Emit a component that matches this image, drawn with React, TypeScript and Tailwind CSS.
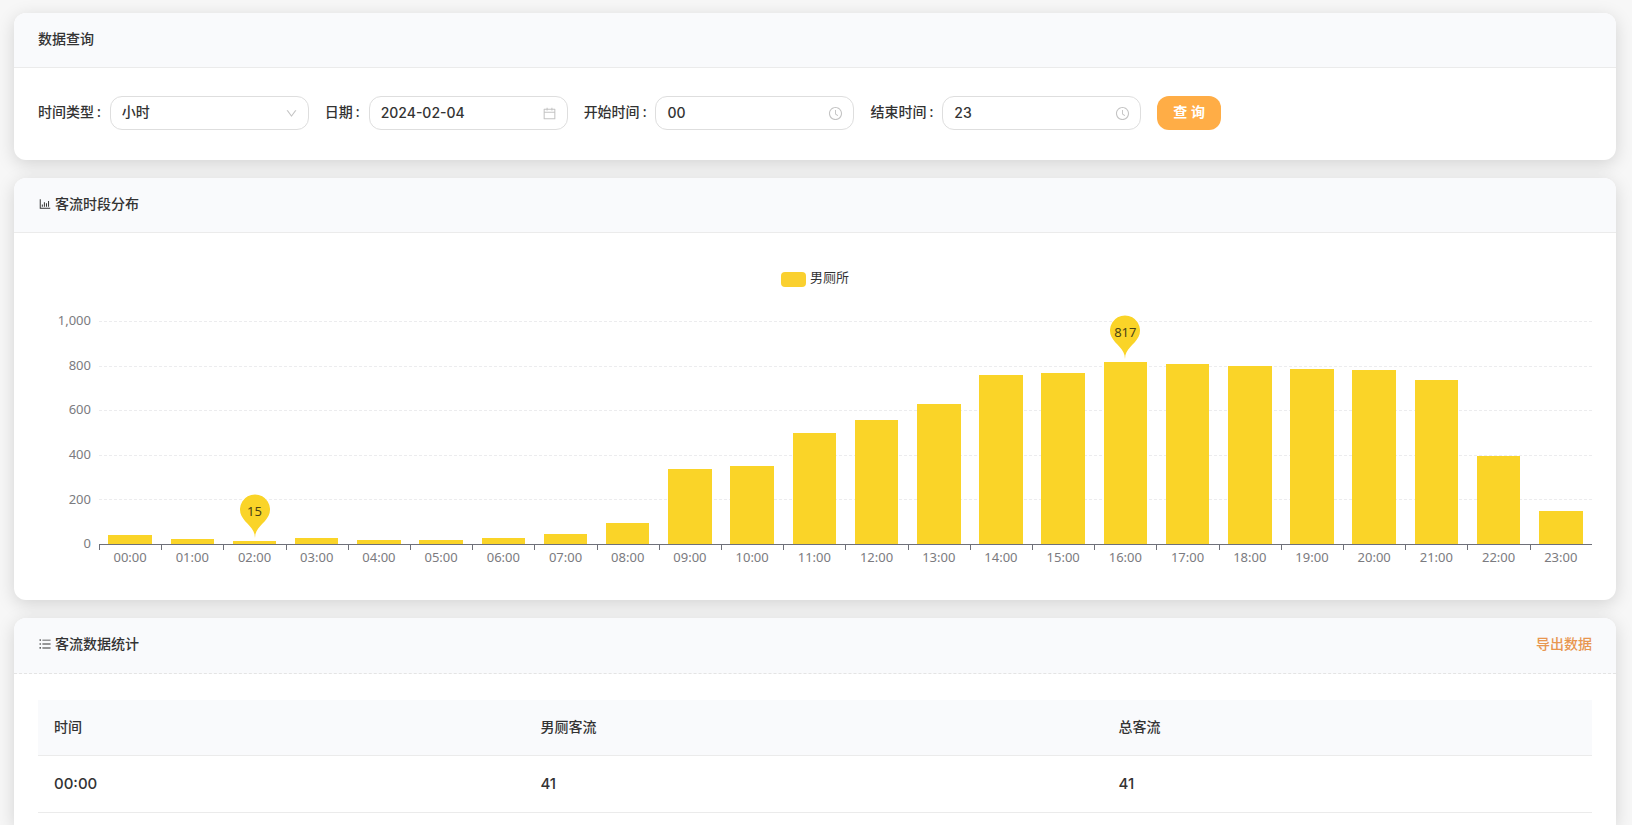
import { useState, type ReactNode } from "react";
import {
  AiOutlineBarChart,
  AiOutlineCalendar,
  AiOutlineClockCircle,
  AiOutlineDown,
  AiOutlineUnorderedList,
} from "react-icons/ai";

const hourly = [
  41, 21, 15, 28, 16, 16, 26, 44, 95, 337, 350, 497, 555, 630, 757, 767, 817, 807, 800, 787, 779,
  734, 393, 146,
];
const axisMax = 1000;
const ticks = [1000, 800, 600, 400, 200, 0];
const peak = Math.max(...hourly);
const low = Math.min(...hourly);
const hourLabel = (hour: number) => `${String(hour).padStart(2, "0")}:00`;
const tableRows = hourly.slice(0, 1);

function Field({ id, label, icon, children }: { id: string; label: string; icon: ReactNode; children: ReactNode }) {
  return (
    <div className="flex items-center">
      <label htmlFor={id} className="pr-[9px] pb-[2px] whitespace-nowrap">
        {label}
        <span className="ml-[3px]">:</span>
      </label>
      <div className="relative w-[199px]">
        {children}
        <span className="pointer-events-none absolute inset-y-0 right-[11px] flex items-center text-[#c4c4c4]">
          {icon}
        </span>
      </div>
    </div>
  );
}

const control =
  "block h-[34px] w-full appearance-none rounded-xl border border-[#dedede] bg-white pr-8 pb-[2px] pl-[11px] font-['Inter','Noto_Sans_CJK_SC',sans-serif] text-sm font-medium text-[#333] outline-none focus:border-[#ffad46]";

const card = "bg-white shadow-[0_4px_18px_rgba(0,0,0,0.15)]";

function Pin({ value }: { value: number }) {
  return (
    <div className="absolute bottom-full left-1/2 mb-[3px] h-11 w-[30px] -translate-x-1/2">
      <svg viewBox="0 0 30 44" className="absolute inset-0 h-11 w-[30px]" aria-hidden="true">
        <path
          d="M1.45 21.86A15 15 0 1 1 28.55 21.86C24.69 29.99 15 33.5 15 44C15 33.5 5.31 29.99 1.45 21.86Z"
          fill="#fad428"
        />
      </svg>
      <span className="relative block text-center text-[13px] leading-[34px] text-[#4a4316]">{value}</span>
    </div>
  );
}

function Chart() {
  return (
    <div className="px-6 pt-8 pb-9">
      <div className="flex h-7 items-center justify-center gap-1 text-[13px] text-[#333]">
        <span className="h-[15px] w-[25px] rounded bg-[#fad02f]" />
        <span className="pb-[2px]">男厕所</span>
      </div>
      <div className="mt-7 flex">
        <div className="flex h-[223px] w-[61px] flex-col justify-between pr-2 text-right text-[13px] text-[#7b7b80]">
          {ticks.map((tick) => (
            <span key={tick} className="flex h-0 items-center justify-end">
              {tick.toLocaleString("en-US")}
            </span>
          ))}
        </div>
        <div className="min-w-0 flex-1">
          <div className="relative h-[223px]">
            <div className="absolute inset-0 flex flex-col justify-between" aria-hidden="true">
              {ticks.map((tick) => (
                <div key={tick} className="h-0">
                  {tick > 0 && <div className="border-t border-dashed border-[#ececee]" />}
                </div>
              ))}
            </div>
            <div className="relative flex h-full items-end">
              {hourly.map((value, hour) => (
                <div key={hour} className="flex h-full flex-1 items-end justify-center">
                  <div
                    className="relative w-[70%] bg-[#fad428]"
                    style={{ height: `${(value / axisMax) * 100}%` }}
                  >
                    {(value === peak || value === low) && <Pin value={value} />}
                  </div>
                </div>
              ))}
            </div>
          </div>
          <div className="flex border-t border-[#6e7079]">
            {hourly.map((_, hour) => (
              <div key={hour} className="flex-1 text-center text-[13px] text-[#7b7b80]">
                <div className="h-[5px] border-l border-[#6e7079]" />
                <div className="leading-[14px]">{hourLabel(hour)}</div>
              </div>
            ))}
          </div>
        </div>
      </div>
    </div>
  );
}

export default function App() {
  const [type, setType] = useState("hour");
  const [date, setDate] = useState("2024-02-04");
  const [start, setStart] = useState("00");
  const [end, setEnd] = useState("23");

  return (
    <main className="flex min-h-screen flex-col gap-[18px] bg-[#f7f7f7] pt-[13px] pr-4 pl-[14px] font-['Noto_Sans','Noto_Sans_CJK_SC',sans-serif] text-[#333]">
      <section className={`${card} rounded-xl`}>
        <header className="flex h-[55px] items-center rounded-t-xl border-b border-[#ebebeb] bg-[#f9fafc] px-6 pb-[3px]">
          <h2 className="text-sm font-medium">数据查询</h2>
        </header>
        <form
          className="flex flex-wrap items-center gap-4 px-6 pt-7 pb-[30px] text-sm font-medium"
          onSubmit={(event) => event.preventDefault()}
        >
          <Field id="type" label="时间类型" icon={<AiOutlineDown size={13} />}>
            <select id="type" value={type} onChange={(e) => setType(e.target.value)} className={control}>
              <option value="hour">小时</option>
              <option value="day">日</option>
            </select>
          </Field>
          <Field id="date" label="日期" icon={<AiOutlineCalendar size={15} />}>
            <input id="date" value={date} onChange={(e) => setDate(e.target.value)} className={control} />
          </Field>
          <Field id="start" label="开始时间" icon={<AiOutlineClockCircle size={15} />}>
            <input id="start" value={start} onChange={(e) => setStart(e.target.value)} className={control} />
          </Field>
          <Field id="end" label="结束时间" icon={<AiOutlineClockCircle size={15} />}>
            <input id="end" value={end} onChange={(e) => setEnd(e.target.value)} className={control} />
          </Field>
          <button type="submit" className="h-[34px] rounded-xl bg-[#ffad46] px-4 pb-[2px] font-bold text-white">
            查 询
          </button>
        </form>
      </section>

      <section className={`${card} rounded-xl`}>
        <header className="flex h-[55px] items-center gap-[3px] rounded-t-xl border-b border-[#ebebeb] bg-[#f9fafc] px-6 pb-[3px]">
          <AiOutlineBarChart size={14} />
          <h2 className="text-sm font-medium">客流时段分布</h2>
        </header>
        <Chart />
      </section>

      <section className={`${card} grow rounded-t-xl`}>
        <header className="flex h-14 items-center gap-[3px] rounded-t-xl border-b border-dashed border-[#e4e4e4] bg-[#f9fafc] px-6 pb-[3px]">
          <AiOutlineUnorderedList size={14} />
          <h2 className="text-sm font-medium">客流数据统计</h2>
          <button type="button" className="ml-auto text-sm font-medium text-[#e8964f]">
            导出数据
          </button>
        </header>
        <div className="px-6 pt-[26px]">
          <table className="w-full table-fixed text-left text-sm">
            <thead className="bg-[#f9fafc]">
              <tr className="h-[55px] border-b border-[#ebebeb]">
                <th className="w-[31.3%] px-4 font-medium">时间</th>
                <th className="w-[37.2%] px-4 font-medium">男厕客流</th>
                <th className="px-4 font-medium">总客流</th>
              </tr>
            </thead>
            <tbody className="font-['Inter',sans-serif] text-[15px] font-medium">
              {tableRows.map((value, hour) => (
                <tr key={hour} className="h-[57px] border-b border-[#ebebeb]">
                  <td className="px-4">{hourLabel(hour)}</td>
                  <td className="px-4">{value}</td>
                  <td className="px-4">{value}</td>
                </tr>
              ))}
            </tbody>
          </table>
        </div>
      </section>
    </main>
  );
}
